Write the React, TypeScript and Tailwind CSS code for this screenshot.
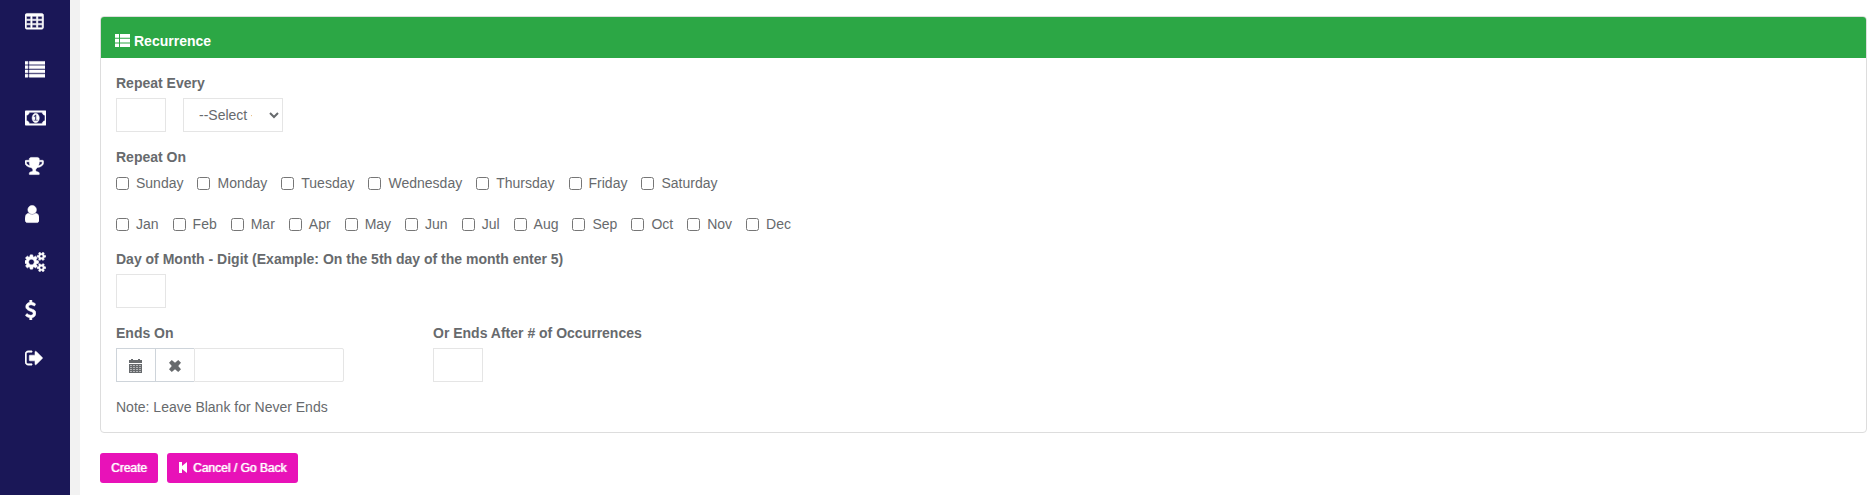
import React from "react";

type IconProps = { viewBox: string; className?: string; children: React.ReactNode };

function Icon({ viewBox, className = "h-5 stroke-current [stroke-width:48px]", children }: IconProps) {
  return (
    <svg viewBox={viewBox} className={className} fill="currentColor" aria-hidden="true">
      {children}
    </svg>
  );
}

const smallGear =
  "v140q0 16-149 31-12 27-30 52 51 113 51 138 0 4-4 7-122 71-124 71-8 0-46-47t-52-68q-20 2-30 2t-30-2q-14 21-52 68t-46 47q-2 0-124-71-4-3-4-7 0-25 51-138-18-25-30-52-149-15-149-31v-140q0-16 149-31 13-29 30-52-51-113-51-138 0-4 4-7 4-2 35-20t59-34 30-16q8 0 46 46.5t52 67.5q20-2 30-2t30 2q51-71 92-112l6-2q4 0 124 70 4 3 4 7 0 25-51 138 17 23 30 52 149 15 149 31z";

const navItems = [
  {
    label: "Calendar",
    icon: (
      <Icon viewBox="64 0 1664 1792">
        <path
          fillRule="evenodd"
          d="M224 128h1344q66 0 113 47t47 113v1088q0 66-47 113t-113 47H224q-66 0-113-47t-47-113V288q0-66 47-113t113-47zM192 384v256h384V384zm512 0v256h384V384zm512 0v256h384V384zM192 768v256h384V768zm512 0v256h384V768zm512 0v256h384V768zM192 1152v256h384v-256zm512 0v256h384v-256zm512 0v256h384v-256z"
        />
      </Icon>
    ),
  },
  {
    label: "Lists",
    icon: (
      <Icon viewBox="0 0 1792 1792">
        <path d="M0 128h256v256H0zM0 512h256v256H0zM0 896h256v256H0zM0 1280h256v256H0zM384 128h1408v256H384zM384 512h1408v256H384zM384 896h1408v256H384zM384 1280h1408v256H384z" />
      </Icon>
    ),
  },
  {
    label: "Money",
    icon: (
      <Icon viewBox="0 0 1920 1792">
        <path d="M768 1152h384v-96h-128v-448h-114l-148 137 77 80q42-37 55-57h2v288h-128v96zm512-256q0 70-21 142t-59.5 134-101.5 101-138 39-138-39-101.5-101-59.5-134-21-142 21-142 59.5-134 101.5-101 138-39 138 39 101.5 101 59.5 134 21 142zm512 256v-512q-106 0-181-75t-75-181h-1152q0 106-75 181t-181 75v512q106 0 181 75t75 181h1152q0-106 75-181t181-75zm128-832v1152q0 26-19 45t-45 19h-1792q-26 0-45-19t-19-45v-1152q0-26 19-45t45-19h1792q26 0 45 19t19 45z" />
      </Icon>
    ),
  },
  {
    label: "Awards",
    icon: (
      <Icon viewBox="64 0 1664 1792">
        <path d="M522 883q-74-162-74-371h-256v96q0 78 94.5 162t235.5 113zm1078-275v-96h-256q0 209-74 371 141-29 235.5-113t94.5-162zm128-128v128q0 71-41.5 143t-112 130-173 97.5-215.5 44.5q-42 54-95 95-38 34-52.5 72.5t-14.5 89.5q0 54 30.5 91t97.5 37q75 0 133.5 45.5t58.5 114.5v64q0 14-9 23t-23 9h-832q-14 0-23-9t-9-23v-64q0-69 58.5-114.5t133.5-45.5q67 0 97.5-37t30.5-91q0-51-14.5-89.5t-52.5-72.5q-53-41-95-95-113-5-215.5-44.5t-173-97.5-112-130-41.5-143v-128q0-40 28-68t68-28h288v-96q0-66 47-113t113-47h576q66 0 113 47t47 113v96h288q40 0 68 28t28 68z" />
      </Icon>
    ),
  },
  {
    label: "Profile",
    icon: (
      <Icon viewBox="256 0 1280 1792">
        <path d="M1536 1399q0 109-62.5 187t-150.5 78h-854q-88 0-150.5-78t-62.5-187q0-85 8.5-160.5t31.5-152 58.5-131 94-89 134.5-34.5q131 128 313 128t313-128q76 0 134.5 34.5t94 89 58.5 131 31.5 152 8.5 160.5zm-256-887q0 159-112.5 271.5t-271.5 112.5-271.5-112.5-112.5-271.5 112.5-271.5 271.5-112.5 271.5 112.5 112.5 271.5z" />
      </Icon>
    ),
  },
  {
    label: "Settings",
    icon: (
      <Icon viewBox="0 0 1920 1792">
        <path
          fillRule="evenodd"
          d="M832 896q0-106-75-181t-181-75-181 75-75 181 75 181 181 75 181-75 75-181zm384-91v185q0 10-7 19.5t-16 10.5l-155 24q-11 35-32 76 34 48 90 115 7 11 7 20 0 12-7 19-23 30-82.5 89.5t-78.5 59.5q-11 0-21-7l-115-90q-37 19-77 31-11 108-23 155-7 24-30 24h-186q-11 0-20-7.5t-10-17.5l-23-153q-34-10-75-31l-118 89q-7 7-20 7-11 0-21-8-144-133-144-160 0-9 7-19 10-14 41-53t47-61q-23-44-35-82l-152-24q-10-1-17-9.5t-7-19.5v-185q0-10 7-19.5t16-10.5l155-24q11-35 32-76-34-48-90-115-7-11-7-20 0-12 7-20 22-30 82-89t79-59q11 0 21 7l115 90q34-18 77-32 11-108 23-154 7-24 30-24h186q11 0 20 7.5t10 17.5l23 153q34 10 75 31l118-89q8-7 20-7 11 0 21 8 144 133 144 160 0 8-7 19-12 16-42 54t-45 60q23 48 34 82l152 23q10 2 17 10.5t7 19.5z"
        />
        <path
          fillRule="evenodd"
          d={"M1600 1408q0-52-38-90t-90-38-90 38-38 90q0 53 37.5 90.5t90.5 37.5 90.5-37.5 37.5-90.5zM1856 1338" + smallGear}
        />
        <path
          fillRule="evenodd"
          d={"M1600 384q0-52-38-90t-90-38-90 38-38 90q0 53 37.5 90.5t90.5 37.5 90.5-37.5 37.5-90.5zM1856 314" + smallGear}
        />
      </Icon>
    ),
  },
  {
    label: "Payments",
    icon: (
      <Icon viewBox="384 0 1024 1792">
        <path d="M1362 1185q0 153-99.5 263.5t-258.5 136.5v175q0 14-9 23t-23 9h-135q-13 0-22.5-9.5t-9.5-22.5v-175q-66-9-127.5-31t-101.5-44.5-74-48-46.5-37.5-17.5-18q-17-21-2-41l103-135q7-10 23-12 15-2 24 9l2 2q113 99 243 125 37 8 74 8 81 0 142.5-43t61.5-122q0-28-15-53t-33.5-42-58.5-37.5-66-32-80-32.5q-39-16-61.5-25t-61.5-26.5-62.5-31-56.5-35.5-53.5-42.5-43.5-49-35.5-58-21-66.5-8.5-78q0-138 98-242t255-134v-180q0-13 9.5-22.5t22.5-9.5h135q14 0 23 9t9 23v176q57 6 110.5 23t87 33.5 63.5 37.5 39 29 15 14q17 18 5 38l-81 146q-8 15-23 16-14 3-27-7-3-3-14.5-12t-39-26.5-58.5-32-74.5-26-85.5-11.5q-95 0-155 43t-60 111q0 26 8.5 48t29.5 41.5 39.5 33 56 31 60.5 27 70 27.5q53 20 81 31.5t76 35 75.5 42.5 62 50 53 63.5 31.5 76.5 13 94z" />
      </Icon>
    ),
  },
  {
    label: "Sign out",
    icon: (
      <Icon viewBox="64 0 1664 1792">
        <path d="M704 1440q0 4 1 20t.5 26.5-3 23.5-10 19.5-20.5 6.5h-320q-119 0-203.5-84.5t-84.5-203.5v-704q0-119 84.5-203.5t203.5-84.5h320q13 0 22.5 9.5t9.5 22.5q0 4 1 20t.5 26.5-3 23.5-10 19.5-20.5 6.5h-320q-66 0-113 47t-47 113v704q0 66 47 113t113 47h312l11.5 1 11.5 3 8 5.5 7 9 2 13.5zm928-544q0 26-19 45l-544 544q-19 19-45 19t-45-19-19-45v-288h-448q-26 0-45-19t-19-45v-384q0-26 19-45t45-19h448v-288q0-26 19-45t45-19 45 19l544 544q19 19 19 45z" />
      </Icon>
    ),
  },
];

const days = ["Sunday", "Monday", "Tuesday", "Wednesday", "Thursday", "Friday", "Saturday"];
const months = ["Jan", "Feb", "Mar", "Apr", "May", "Jun", "Jul", "Aug", "Sep", "Oct", "Nov", "Dec"];

const numberBox = "block h-[34px] w-[50px] border border-[#e5e5e5] px-3 outline-none";
const heading = "block font-bold leading-5";
const actionButton =
  "flex h-[30px] items-center gap-[6px] rounded-[3px] bg-[#e812b8] text-xs text-white [text-shadow:0_0_1px_#ffffff99,1px_0_0_#ffffff80]";

function CheckRow({ items }: { items: string[] }) {
  return (
    <div className="flex flex-wrap gap-x-[14px] leading-5">
      {items.map((item) => (
        <label key={item} className="flex items-center gap-[7px]">
          <input type="checkbox" className="size-[13px]" />
          {item}
        </label>
      ))}
    </div>
  );
}

export default function App() {
  return (
    <div className="flex min-h-screen bg-white font-['Liberation_Sans',Arial,sans-serif] text-sm text-[#676a6d]">
      <nav className="w-20 shrink-0 border-r-[10px] border-[#f2f2f2] bg-[#1a1757] pt-3 text-white">
        <ul className="flex flex-col gap-7">
          {navItems.map((item) => (
            <li key={item.label}>
              <a href="#" aria-label={item.label} className="flex h-5 items-center pl-[25px]">
                {item.icon}
              </a>
            </li>
          ))}
        </ul>
      </nav>

      <main className="min-w-0 grow pt-4 pl-5">
        <section className="rounded border border-[#dddddd]">
          <h2 className="flex h-[41px] items-center gap-1 rounded-t-[3px] bg-[#2ca745] px-[14px] pt-[7px] font-bold text-white">
            <Icon viewBox="0 0 15 15" className="h-[15px]">
              <path d="M0 0h4v3.7H0zM5 0h10v3.7H5zM0 4.7h4v3.7H0zM5 4.7h10v3.7H5zM0 9.4h4v3.6H0zM5 9.4h10v3.6H5z" />
            </Icon>
            Recurrence
          </h2>

          <div className="px-[15px] py-[15px]">
            <label htmlFor="every" className={heading}>Repeat Every</label>
            <div className="mt-[5px] flex gap-[17px]">
              <input id="every" type="text" className={numberBox} />
              <select
                aria-label="Repeat unit"
                className="h-[34px] w-[100px] border border-[#e5e5e5] bg-white pr-[14px] pl-[11px] outline-none"
              >
                <option>--Select --</option>
                <option>Day</option>
                <option>Week</option>
                <option>Month</option>
                <option>Year</option>
              </select>
            </div>

            <h3 className={"mt-[15px] " + heading}>Repeat On</h3>
            <div className="mt-[6px] flex flex-col gap-[21px]">
              <CheckRow items={days} />
              <CheckRow items={months} />
            </div>

            <label htmlFor="monthday" className={"mt-[15px] " + heading}>
              Day of Month - Digit (Example: On the 5th day of the month enter 5)
            </label>
            <input id="monthday" type="text" className={"mt-[5px] " + numberBox} />

            <div className="mt-[15px] flex gap-[89px]">
              <div>
                <label htmlFor="ends" className={heading}>Ends On</label>
                <div className="mt-[5px] flex h-[34px]">
                  <button
                    type="button"
                    aria-label="Pick date"
                    className="flex w-10 items-center justify-center border border-[#ced4da] pt-[2px]"
                  >
                    <Icon viewBox="0 0 14 14" className="h-[14px]">
                      <path d="M0 1h2V0h2v1h5V0h2v1h2v3H0z" />
                      <path d="M0 5h13v9H0z" fillOpacity="0.5" />
                      <path
                        fillRule="evenodd"
                        d="M0 5h13v9H0zM1 6v1h2V6zm3 0v1h2V6zm3 0v1h2V6zm3 0v1h2V6zM1 8v1h2V8zm3 0v1h2V8zm3 0v1h2V8zm3 0v1h2V8zM1 10v1h2v-1zm3 0v1h2v-1zm3 0v1h2v-1zm3 0v1h2v-1zM1 12v1h2v-1zm3 0v1h2v-1zm3 0v1h2v-1zm3 0v1h2v-1z"
                      />
                    </Icon>
                  </button>
                  <button
                    type="button"
                    aria-label="Clear date"
                    className="flex w-[38px] items-center justify-center border-y border-[#ced4da] pt-[2px]"
                  >
                    <Icon viewBox="0 0 12 12" className="h-3">
                      <path d="M2.8 0 6 2.8 9.2 0 12 2.8 9.2 6 12 9.2 9.2 12 6 9.2 2.8 12 0 9.2 2.8 6 0 2.8z" />
                    </Icon>
                  </button>
                  <input id="ends" type="text" className="w-[150px] rounded-r-xs border border-[#e5e5e5] px-3 outline-none" />
                </div>
              </div>
              <div>
                <label htmlFor="count" className={heading}>Or Ends After # of Occurrences</label>
                <input id="count" type="text" className={"mt-[5px] " + numberBox} />
              </div>
            </div>

            <p className="mt-[15px] leading-5">Note: Leave Blank for Never Ends</p>
          </div>
        </section>

        <div className="mt-5 flex gap-[9px]">
          <button type="submit" className={"px-[11px] " + actionButton}>Create</button>
          <button type="button" className={"px-3 " + actionButton}>
            <Icon viewBox="0 0 8 12" className="h-3">
              <path d="M0 0h3v4L8 0v11L3 7v4H0z" />
            </Icon>
            Cancel / Go Back
          </button>
        </div>
      </main>
    </div>
  );
}
